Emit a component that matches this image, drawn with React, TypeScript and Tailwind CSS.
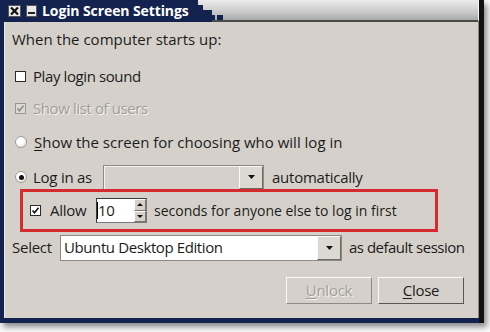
import React from 'react'

const font = { fontFamily: '"Open Sans", "Noto Sans", sans-serif' }

function Check({ checked, disabled }: { checked?: boolean; disabled?: boolean }) {
  return (
    <div
      className={`w-[11px] h-[11px] flex items-center justify-center border ${
        disabled ? 'border-[#9a968f] bg-[#dcd9d3]' : 'border-[#2a2a2a] bg-white'
      }`}
    >
      {checked && (
        <svg width="9" height="9" viewBox="0 0 9 9">
          <path d="M1.5 4.5 L3.5 6.8 L7.5 1.8" fill="none" stroke={disabled ? '#8f8b85' : '#111'} strokeWidth="1.6" />
        </svg>
      )}
    </div>
  )
}

function Radio({ on }: { on?: boolean }) {
  return (
    <div className="w-[12px] h-[12px] rounded-full border border-[#a19d96] bg-[radial-gradient(circle_at_40%_35%,#ffffff_40%,#d8d5cf_100%)] flex items-center justify-center">
      {on && <div className="w-[5px] h-[5px] rounded-full bg-[#111]" />}
    </div>
  )
}

function Arrow() {
  return (
    <svg width="7" height="4" viewBox="0 0 7 4">
      <path d="M0 0 H7 L3.5 4 Z" fill="#111" />
    </svg>
  )
}

export default function App() {
  return (
    <div className="w-[490px] h-[332px] bg-[#fafafa] overflow-hidden text-[15px] text-[#1c1c1c] tracking-[-0.25px]" style={font}>
      <div className="w-[484px] h-[323px] flex flex-col bg-[#13224f] border-r-[5px] border-r-[#121212] shadow-[3px_4px_6px_rgba(0,0,0,0.45)]">
        {/* title bar */}
        <div className="h-[22px] flex shrink-0">
          <div className="w-[198px] flex items-center bg-[#13224f] whitespace-nowrap">
            <div className="ml-[8px] w-[13px] h-[12px] bg-[#e8e8e8] border border-[#555] flex items-center justify-center">
              <svg width="9" height="8" viewBox="0 0 9 8">
                <path d="M1 0.5 L8 7.5 M8 0.5 L1 7.5" stroke="#111" strokeWidth="2.2" />
              </svg>
            </div>
            <div className="ml-[5px] w-[11px] h-[12px] bg-[#e8e8e8] border border-[#555] flex items-end justify-center pb-[2px]">
              <div className="w-[7px] h-[2px] bg-[#222]" />
            </div>
            <span className="ml-[5px] text-white font-bold text-[14px] leading-none tracking-[-0.1px]">Login Screen Settings</span>
          </div>
          <div className="flex-1 relative bg-[linear-gradient(#ececec,#c9c9c9_60%,#a9a9a9)] border-b-2 border-b-[#4a4a4a] border-r border-r-[#f6f6f6]">
            <svg width="30" height="22" viewBox="0 0 30 22" className="absolute left-0 top-0">
              <rect x="0" y="5" width="5" height="17" fill="#13224f" />
              <rect x="0" y="10" width="14" height="12" fill="#13224f" />
              <rect x="5" y="12" width="9" height="6" fill="#13224f" />
              <rect x="14" y="15" width="3" height="5" fill="#13224f" />
              <rect x="19" y="15" width="6" height="5" fill="#13224f" />
            </svg>
          </div>
        </div>

        {/* body */}
        <div className="flex-1 ml-[4px] mb-[5px] bg-[#d5d1ca] border-l border-l-[#ece9e4] border-r border-r-[#8d8983] flex flex-col whitespace-nowrap">
          <div className="h-[24px] mt-[5px] flex items-center pl-[7px] tracking-[0px]">When the computer starts up:</div>

          <div className="h-[24px] mt-[13px] flex items-center pl-[10px] gap-[7px]">
            <Check />
            <span className="tracking-[-0.4px]">Play login sound</span>
          </div>

          <div className="h-[24px] mt-[8px] flex items-center pl-[10px] gap-[7px]">
            <Check checked disabled />
            <span className="text-[#a29e97] [text-shadow:1px_1px_0_#f4f2ee] tracking-[-0.4px]">Show list of users</span>
          </div>

          <div className="h-[24px] mt-[10px] flex items-center pl-[10px] gap-[7px]">
            <Radio />
            <span className="tracking-[0px]">
              <span className="underline underline-offset-2">S</span>how the screen for choosing who will log in
            </span>
          </div>

          <div className="h-[24px] mt-[11px] flex items-center pl-[10px]">
            <Radio on />
            <span className="ml-[6px] w-[70px]">Log in as</span>
            <div className="w-[161px] h-[25px] flex border border-[#8d8983] bg-[#d5d1ca]">
              <div className="flex-1 border-t border-l border-[#f4f2ee]" />
              <div className="w-[24px] flex items-center justify-center border border-[#fbfaf8] border-r-[#6e6a64] border-b-[#6e6a64] bg-[#dcd9d3]">
                <Arrow />
              </div>
            </div>
            <span className="ml-[8px]">automatically</span>
          </div>

          <div className="ml-[15px] w-[418px] h-[43px] border-[3px] border-[#d42a30] flex items-center pl-[7px]">
            <Check checked />
            <span className="ml-[9px] w-[46px]">Allow</span>
            <div className="w-[51px] h-[25px] flex border border-[#777] border-t-[#3a3a3a] border-l-[#3a3a3a] bg-white">
              <div className="flex-1 flex items-center">
                <div className="w-px h-[17px] bg-black" />
                <span>10</span>
              </div>
              <div className="w-[12px] flex flex-col bg-[#d5d1ca]">
                <div className="flex-1 flex items-center justify-center border border-[#fbfaf8] border-r-[#777] border-b-[#777]">
                  <svg width="6" height="3" viewBox="0 0 6 3"><path d="M0 3 H6 L3 0 Z" fill="#111" /></svg>
                </div>
                <div className="flex-1 flex items-center justify-center border border-[#fbfaf8] border-r-[#777] border-b-[#777]">
                  <svg width="6" height="3" viewBox="0 0 6 3"><path d="M0 0 H6 L3 3 Z" fill="#111" /></svg>
                </div>
              </div>
            </div>
            <span className="ml-[7px] text-[14px] tracking-[0px]">seconds for anyone else to log in first</span>
          </div>

          <div className="h-[25px] mt-[3px] flex items-center pl-[7px]">
            <span className="w-[48px]">Select</span>
            <div className="w-[282px] h-[26px] flex border border-[#8d8983] bg-white">
              <div className="flex-1 flex items-center pl-[3px] tracking-[-0.4px]">Ubuntu Desktop Edition</div>
              <div className="w-[24px] flex items-center justify-center border border-[#fbfaf8] border-r-[#6e6a64] border-b-[#6e6a64] bg-[#dcd9d3]">
                <Arrow />
              </div>
            </div>
            <span className="ml-[7px] tracking-[-0.5px]">as default session</span>
          </div>

          <div className="mt-[17px] flex justify-end gap-[6px] pr-[14px]">
            <div className="w-[86px] h-[27px] flex items-center justify-center border border-[#fbfaf8] border-r-[#8d8983] border-b-[#8d8983] text-[#a29e97] [text-shadow:1px_1px_0_#f4f2ee]">
              <span><span className="underline underline-offset-2">U</span>nlock</span>
            </div>
            <div className="w-[86px] h-[27px] flex items-center justify-center border border-[#fbfaf8] border-r-[#5a5650] border-b-[#5a5650]">
              <span><span className="underline underline-offset-2">C</span>lose</span>
            </div>
          </div>
        </div>
      </div>
    </div>
  )
}
